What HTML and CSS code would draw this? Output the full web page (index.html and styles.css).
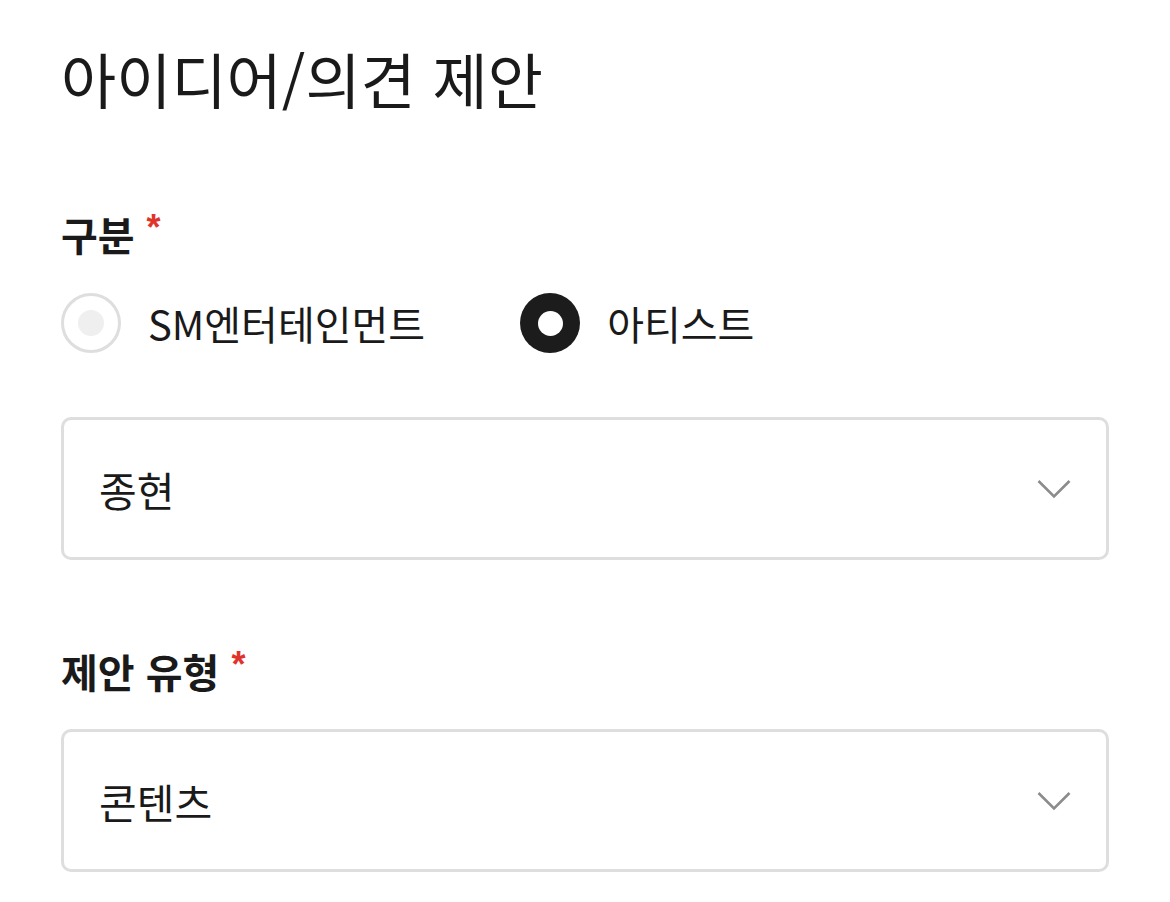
FILE: index.html
```html
<!DOCTYPE html>
<html lang="ko">
<head>
<meta charset="utf-8">
<title>아이디어/의견 제안</title>
<link rel="stylesheet" href="styles.css">
</head>
<body>
<main class="page">
  <h1 class="title">아이디어/의견 제안</h1>

  <section class="field">
    <div class="field-label">구분<span class="req">*</span></div>
    <div class="radio-group">
      <label class="radio-option">
        <span class="radio"></span>
        <span class="radio-text">SM엔터테인먼트</span>
      </label>
      <label class="radio-option">
        <span class="radio checked"></span>
        <span class="radio-text">아티스트</span>
      </label>
    </div>
    <div class="select first">
      <span class="select-value">종현</span>
      <svg class="chevron" width="34" height="20" viewBox="0 0 34 20"><path d="M1.5 2 L17 17.5 L32.5 2" fill="none" stroke="#8c8c8c" stroke-width="2.6"/></svg>
    </div>
  </section>

  <section class="field second">
    <div class="field-label">제안 유형<span class="req">*</span></div>
    <div class="select">
      <span class="select-value">콘텐츠</span>
      <svg class="chevron" width="34" height="20" viewBox="0 0 34 20"><path d="M1.5 2 L17 17.5 L32.5 2" fill="none" stroke="#8c8c8c" stroke-width="2.6"/></svg>
    </div>
  </section>
</main>
</body>
</html>
```

FILE: styles.css
```css
html, body {
  margin: 0;
  padding: 0;
  background: #ffffff;
}

body {
  font-family: "Noto Sans CJK KR", "Noto Sans", sans-serif;
  color: #1a1a1a;
}

.page {
  padding: 50px 61px 0 61px;
  width: 1048px;
}

.title {
  margin: 0;
  font-size: 60px;
  line-height: 56px;
  font-weight: 400;
  color: #1a1a1a;
}

.field {
  margin-top: 110px;
}

.field.second {
  margin-top: 93px;
}

.field-label {
  font-size: 40px;
  line-height: 36px;
  font-weight: 700;
  color: #1a1a1a;
  display: flex;
  align-items: flex-start;
}

.req {
  color: #e0332b;
  font-size: 36px;
  line-height: 22px;
  margin-left: 12px;
  margin-top: 1px;
  font-family: "Liberation Sans", sans-serif;
  font-weight: 700;
}

.radio-group {
  display: flex;
  align-items: center;
  gap: 95px;
  margin-top: 41px;
  height: 60px;
}

.radio-option {
  display: flex;
  align-items: center;
  gap: 27px;
}

.radio {
  box-sizing: border-box;
  width: 60px;
  height: 60px;
  border-radius: 50%;
  border: 3px solid #dedede;
  display: flex;
  align-items: center;
  justify-content: center;
  flex: none;
}

.radio::after {
  content: "";
  width: 26px;
  height: 26px;
  border-radius: 50%;
  background: #efefef;
}

.radio.checked {
  border: none;
  background: #1c1c1c;
}

.radio.checked::after {
  width: 25px;
  height: 25px;
  background: #ffffff;
}

.radio-text {
  font-size: 40px;
  line-height: 36px;
  color: #1a1a1a;
}

.select {
  box-sizing: border-box;
  margin-top: 40px;
  height: 143px;
  border: 3px solid #dedede;
  border-radius: 10px;
  display: flex;
  align-items: center;
  justify-content: space-between;
  padding: 0 35px 0 35px;
}

.select.first {
  margin-top: 64px;
}

.select-value {
  font-size: 41px;
  line-height: 36px;
  color: #1a1a1a;
}

.chevron {
  display: block;
  flex: none;
}
```
